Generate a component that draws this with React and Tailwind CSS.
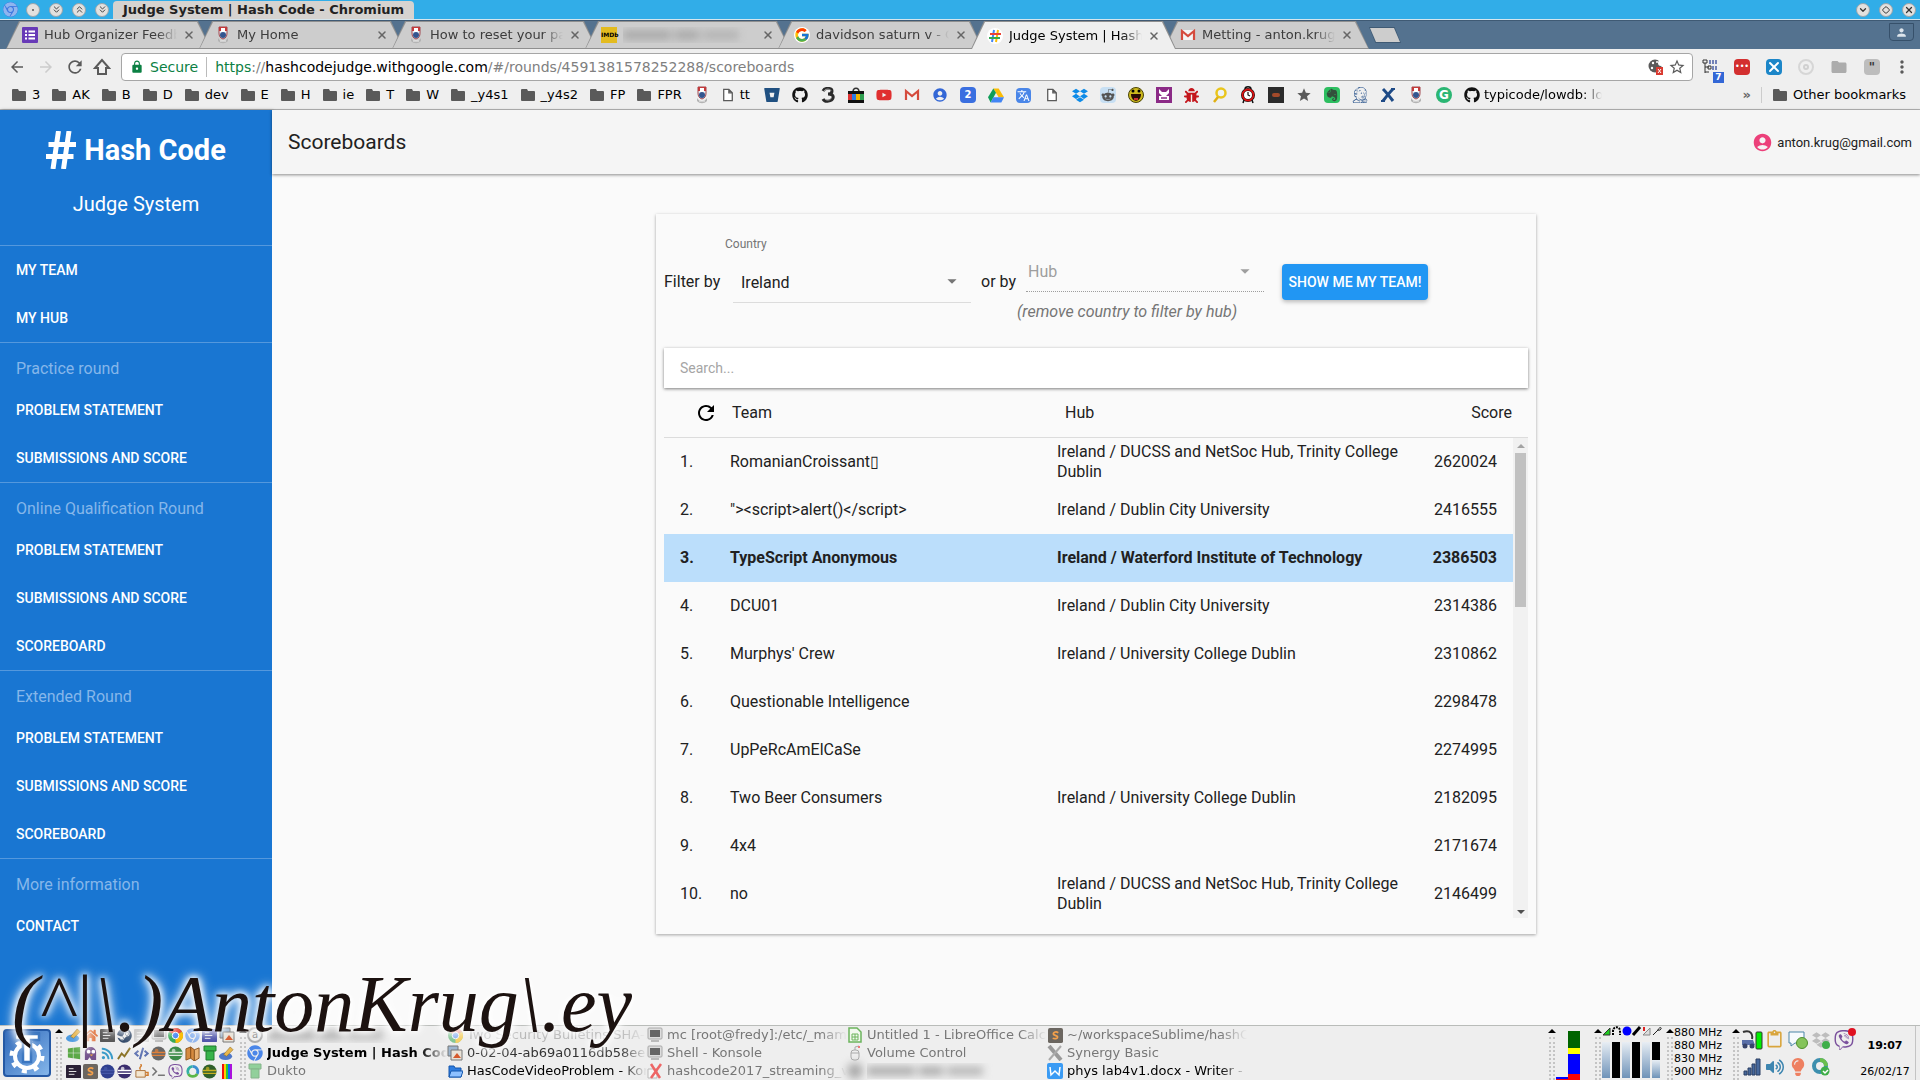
import { useState } from "react";
import {
  FaBitbucket, FaBug, FaChrome, FaCode, FaDropbox, FaEvernote, FaGithub,
  FaHome, FaJenkins, FaLightbulb, FaRedditAlien, FaRss, FaSteam,
  FaTerminal, FaViber, FaVolumeUp, FaWindows, FaYoutube,
} from "react-icons/fa";
import { FcGoogle } from "react-icons/fc";
import {
  MdAccountCircle, MdArrowBack, MdArrowDropDown, MdArrowForward, MdContentPaste,
  MdFolder, MdLock, MdMoreVert, MdPerson, MdRefresh, MdStar, MdStarBorder, MdTranslate,
} from "react-icons/md";
import { ChevronDown, ChevronsDown, ChevronsUp, Diamond, X } from "lucide-react";

/* ---------- small drawings ---------- */

function Crest() {
  return (
    <svg width="16" height="18" viewBox="0 0 16 18">
      <path d="M4 1h8v6c0 3-1 5-4 6-3-1-4-3-4-6z" fill="#e8ebf1" stroke="#a0444c" />
      <path d="M4 1h8v4H4z" fill="#c33a3a" />
      <path d="M6 2h4v4H6z" fill="#fff" />
      <circle cx="8" cy="9" r="3" fill="#33558f" />
      <path d="M3 12c2 4 8 4 10 0v3c-3 3-7 3-10 0z" fill="#b4b4b4" />
      <path d="M5 15h6" stroke="#eee" />
    </svg>
  );
}

function Gmail() {
  return (
    <svg width="16" height="16" viewBox="0 0 16 16">
      <path d="M1 3h14v10H1z" fill="#f4f4f4" />
      <path d="M2 13V4l6 5 6-5v9" fill="none" stroke="#d54b3d" strokeWidth="2.2" />
    </svg>
  );
}

function HashIcon() {
  return (
    <svg width="16" height="16" viewBox="0 0 16 16">
      <circle cx="8" cy="8" r="8" fill="#fff" />
      <g strokeWidth="2">
        <path d="M7 2 5 14" stroke="#4285f4" />
        <path d="M11 2 9 14" stroke="#fbbc05" />
        <path d="M3 6h11" stroke="#ea4335" />
        <path d="M2 10h11" stroke="#34a853" />
      </g>
    </svg>
  );
}

function FormsIcon() {
  return (
    <svg width="16" height="16" viewBox="0 0 16 16">
      <rect width="16" height="16" rx="1" fill="#673ab7" />
      <path d="M3 4.500h2M3 8h2M3 11.500h2M6.500 4.500H13M6.500 8H13M6.500 11.500H13" stroke="#fff" strokeWidth="1.800" />
    </svg>
  );
}

function FileIcon() {
  return (
    <svg width="12" height="16" viewBox="0 0 14 16">
      <path d="M2 1.500h6l4 4v9H2zM8 1.500v4h4" fill="#fff" stroke="#5a5a5a" strokeWidth="1.500" />
    </svg>
  );
}

function HomeIcon() {
  return (
    <svg width="18" height="18" viewBox="0 0 18 18">
      <path d="M9 2 2 10h3v6h8v-6h3z" fill="none" stroke="#5a5a5a" strokeWidth="2" />
    </svg>
  );
}

function ThreeIcon() {
  return (
    <svg width="14" height="16" viewBox="0 0 14 16">
      <path d="M2 4c2-4 9-3 9 0s-3 3-4 3c3 0 6 1 5 4s-8 5-10 1" fill="none" stroke="#2a2a2a" strokeWidth="3" />
      <path d="M3 4c2-3 7-2 7 0M4 12c2 2 6 1 6-1" fill="none" stroke="#bbb" strokeWidth=".8" />
    </svg>
  );
}

function ShopIcon() {
  return (
    <svg width="16" height="16" viewBox="0 0 16 16">
      <path d="M5 5c0-5 6-5 6 0" fill="none" stroke="#333" strokeWidth="1.500" />
      <path d="M0 4h16v3H0zM0 13h16v3H0z" fill="#111" />
      <path d="M0 7h4v6H0z" fill="#d33" />
      <path d="M4 7h4v6H4z" fill="#2c7be5" />
      <path d="M8 7h4v6H8z" fill="#f2b400" />
      <path d="M12 7h4v6h-4z" fill="#2e9e4f" />
    </svg>
  );
}

function SmileyIcon() {
  return (
    <svg width="16" height="16" viewBox="0 0 16 16">
      <circle cx="8" cy="8" r="7.500" fill="#cdb91c" stroke="#4a4408" />
      <path d="M3 7h10c0 9-10 9-10 0z" fill="#2b0d06" />
      <circle cx="5" cy="4" r="1.500" />
      <circle cx="11" cy="4" r="1.500" />
      <path d="M6 11h4v2H6z" fill="#c33" />
    </svg>
  );
}

function PurpleCat() {
  return (
    <svg width="16" height="16" viewBox="0 0 16 16">
      <rect width="16" height="16" fill="#8b2a86" />
      <path d="m3 2 3 3h4l3-3v4l-3 3h3v4H3V9h3L3 6z" fill="#fff" />
      <path d="M5 11h6" stroke="#8b2a86" strokeWidth="1.500" />
    </svg>
  );
}

function Magnifier() {
  return (
    <svg width="16" height="16" viewBox="0 0 16 16">
      <circle cx="9" cy="6" r="4.500" fill="#eef3f5" stroke="#e9c51c" strokeWidth="2.500" />
      <path d="m6 10-4 5" stroke="#e0b013" strokeWidth="2.500" />
    </svg>
  );
}

function RedClock() {
  return (
    <svg width="14" height="18" viewBox="0 0 14 18">
      <path d="M4 3c0-3 6-3 6 0M3 14l-1 3M11 14l1 3" fill="none" stroke="#111" strokeWidth="1.500" />
      <circle cx="7" cy="9" r="5.500" fill="#fff" stroke="#111" strokeWidth="3" />
      <circle cx="7" cy="9" r="5.500" fill="none" stroke="#d11" strokeWidth="1.800" />
      <path d="M7 6v3l2 1" stroke="#111" fill="none" strokeWidth="1.200" />
    </svg>
  );
}

function XMark() {
  return (
    <svg width="16" height="16" viewBox="0 0 16 16">
      <path d="M3 2c4 4 7 8 10 12M13 2C9 6 6 10 3 14" fill="none" stroke="#1d4a86" strokeWidth="3" />
      <path d="M1 14h4M11 2h4" stroke="#1d4a86" strokeWidth="2" />
    </svg>
  );
}

function CookieBlocked() {
  return (
    <svg width="16" height="18" viewBox="0 0 16 18">
      <circle cx="7" cy="8" r="6.500" fill="#5a5a5a" />
      <g fill="#fff">
        <circle cx="5" cy="5" r="1.200" />
        <circle cx="9" cy="4" r="1" />
        <circle cx="4" cy="10" r="1.200" />
        <circle cx="13" cy="5" r="3" />
      </g>
      <rect x="8" y="9" width="7" height="8" fill="#d93a30" />
      <path d="m10 11 3 4m0-4-3 4" stroke="#fff" />
    </svg>
  );
}

function TreeExtension() {
  return (
    <span className="relative block size-4">
      <svg width="16" height="16" viewBox="0 0 16 16">
        <path d="M1 1h4v3H1zM3 4v10M3 8h4M3 13h4M6 7h3v3H6z" fill="none" stroke="#333" />
        <path d="M7 2h9M7 4h9M10 8h6M10 10h6" stroke="#4b5fa5" strokeWidth="1.500" strokeDasharray="2 1" />
      </svg>
      <span className="absolute -bottom-2 -right-1.5 w-[11px] bg-[#3367d6] text-center text-[9px] font-bold leading-[11px] text-white">7</span>
    </span>
  );
}

function HashLogo() {
  return (
    <svg width="30" height="38" viewBox="0 0 30 38" className="shrink-0">
      <g fill="none" stroke="#fff" strokeWidth="5">
        <path d="M12.500 0 7 38M23 0l-5.500 38M2.500 13.500H30M0 25.500h27.500" />
      </g>
    </svg>
  );
}

function GearLogo() {
  return (
    <svg width="38" height="42" viewBox="0 0 38 42">
      <circle cx="19" cy="24" r="12" fill="none" stroke="#fff" strokeWidth="4" />
      <circle cx="19" cy="24" r="15.500" fill="none" stroke="#fff" strokeWidth="4" strokeDasharray="5 7.170" />
      <path d="M6 0h26v9H6z" fill="#3b76c0" />
      <path d="M7 2h24v6h-8v22h-8V8H7z" fill="#fff" stroke="#3b76c0" strokeWidth="2.500" />
    </svg>
  );
}

function MonitorIcon() {
  return (
    <svg width="16" height="16" viewBox="0 0 16 16">
      <rect x="1" y="1" width="14" height="11" rx="1" fill="#ddd" stroke="#aaa" />
      <path d="M3 3h10v7H3z" fill="#666" />
      <path d="M4 14h8" stroke="#bbb" strokeWidth="2" />
    </svg>
  );
}

function SheetIcon() {
  return (
    <svg width="14" height="16" viewBox="0 0 14 16">
      <path d="M1 1h8l4 4v10H1z" fill="#f1f8ee" stroke="#6cb45d" strokeWidth="1.500" />
      <path d="M4 7h6v6H4zM7 7v6M4 10h6" fill="none" stroke="#6cb45d" />
    </svg>
  );
}

function MouseIcon() {
  return (
    <svg width="14" height="16" viewBox="0 0 14 16">
      <rect x="3" y="5" width="8" height="10" rx="3" fill="#eee" stroke="#aaa" />
      <path d="M3 8h8M7 5V2l4-1" fill="none" stroke="#aaa" />
      <path d="M10 1h2v2h-2z" fill="#e77" />
    </svg>
  );
}

function CrossWindow({ color }) {
  return (
    <svg width="16" height="16" viewBox="0 0 16 16">
      <path d="M1 6h9v9H1z" fill="#f6f6f6" stroke="#bbb" />
      <path d="m4 1 9 14M14 1 4 15" stroke={color} strokeWidth="2.500" />
    </svg>
  );
}

function BigX() {
  return (
    <svg width="16" height="16" viewBox="0 0 16 16">
      <path d="m2 1 12 14" stroke="#999" strokeWidth="4" />
      <path d="M14 1 2 15" stroke="#aaa" strokeWidth="2" />
    </svg>
  );
}

function ImageIcon() {
  return (
    <svg width="16" height="16" viewBox="0 0 16 16">
      <path d="M1 1h10v10H1z" fill="#9db6cf" stroke="#777" />
      <path d="M4 5h11v10H4z" fill="#e9e3d8" stroke="#777" />
      <path d="m6 13 4-5 4 5z" fill="#d65a2c" />
    </svg>
  );
}

function BlueFolder() {
  return (
    <svg width="16" height="16" viewBox="0 0 16 16">
      <path d="M2 14V3h5l1 2h6v9z" fill="#2f7de0" stroke="#1457ad" />
      <path d="m2 14 2-6h12l-2 6z" fill="#8dc0ff" stroke="#1457ad" />
    </svg>
  );
}

function WriterIcon() {
  return (
    <svg width="16" height="16" viewBox="0 0 16 16">
      <rect width="16" height="16" rx="2" fill="#3a9bf4" />
      <path d="m3 4 1 8 4-4 4 4 1-8" fill="none" stroke="#fff" strokeWidth="1.500" />
    </svg>
  );
}

function PipeIcon({ faded }) {
  return (
    <svg width="14" height="16" viewBox="0 0 14 16" opacity={faded ? 0.5 : 1}>
      <path d="M1 1h12v5H1z" fill="#37b34a" stroke="#1e7c2d" />
      <path d="M3 6h8v9H3z" fill="#37b34a" stroke="#1e7c2d" />
    </svg>
  );
}

function SublimeIcon() {
  return (
    <svg width="15" height="15" viewBox="0 0 16 16">
      <rect width="16" height="16" rx="2" fill="#6b6660" />
      <path d="M11 5c-3-2-6 0-5 2l4 2c1 2-2 3-5 2" fill="none" stroke="#f4a04a" strokeWidth="1.800" />
    </svg>
  );
}

function Pencil({ color }) {
  return (
    <svg width="15" height="15" viewBox="0 0 16 16">
      <ellipse cx="7" cy="11" rx="7" ry="4" fill={color} />
      <path d="m5 9 7-8 3 3-7 7z" fill="#e9b64a" stroke="#8b6a23" strokeWidth=".6" />
    </svg>
  );
}

function Globe({ a, b }) {
  return (
    <svg width="15" height="15" viewBox="0 0 16 16">
      <circle cx="8" cy="8" r="7.500" fill={a} />
      <path d="M1 7h14M1 10h14" stroke={b} strokeWidth="1.500" />
      <circle cx="6" cy="5" r="2" fill={b} opacity=".7" />
    </svg>
  );
}

function ColorRing() {
  return (
    <svg width="15" height="15" viewBox="0 0 16 16" fill="none" strokeWidth="3">
      <path d="M8 2.500a5.500 5.500 0 0 1 5 8" stroke="#3a8fd0" />
      <path d="M13 10.500a5.500 5.500 0 0 1-9.500 0" stroke="#5cb648" />
      <path d="M3.500 10.500a5.500 5.500 0 0 1 4.500-8" stroke="#32b0a5" />
    </svg>
  );
}

function Rainbow() {
  return (
    <svg width="10" height="15" viewBox="0 0 10 15">
      <path d="M0 0h2v15H0z" fill="#e11" />
      <path d="M2 0h2v15H2z" fill="#fc0" />
      <path d="M4 0h2v15H4z" fill="#2c3" />
      <path d="M6 0h2v15H6z" fill="#16f" />
      <path d="M8 0h2v15H8z" fill="#a1d" />
    </svg>
  );
}

function DarkWindow({ color }) {
  return (
    <svg width="15" height="15" viewBox="0 0 16 16">
      <rect y="1" width="16" height="14" rx="1" fill={color} />
      <path d="M3 5h5M3 8h8M3 11h6" stroke="#eee" />
    </svg>
  );
}

function DriveIcon() {
  return (
    <svg width="17" height="15" viewBox="0 0 18 16">
      <path d="M6 0h6l6 10h-6z" fill="#fbbc05" />
      <path d="M6 0 0 10l3 6 6-11z" fill="#0f9d58" />
      <path d="m6 10h12l-3 6H3z" fill="#4285f4" />
    </svg>
  );
}

function ChromeIcon() {
  return (
    <svg width="15" height="15" viewBox="0 0 16 16">
      <circle cx="8" cy="8" r="8" fill="#34a853" />
      <path d="M8 8 1 4a8 8 0 0 1 14 0z" fill="#ea4335" />
      <path d="M8 8l7-4a8 8 0 0 1-7 12z" fill="#fbbc05" />
      <circle cx="8" cy="8" r="3.500" fill="#4285f4" stroke="#fff" />
    </svg>
  );
}

function PurpleBird() {
  return (
    <svg width="15" height="15" viewBox="0 0 16 16">
      <path d="M2 15V7c0-8 12-8 12 0v8H9l-2-3-2 3z" fill="#73528c" />
      <circle cx="6" cy="6" r="2" fill="#fff" />
      <circle cx="11" cy="6" r="2" fill="#fff" />
      <path d="M7 9h4l-2 2z" fill="#e8a23c" />
    </svg>
  );
}

function Spark() {
  return (
    <svg width="15" height="15" viewBox="0 0 16 16">
      <path d="m1 14 4-6 3 3 6-9" fill="none" stroke="#8a7327" strokeWidth="2" />
    </svg>
  );
}

function MapIcon() {
  return (
    <svg width="15" height="15" viewBox="0 0 16 16">
      <path d="m1 3 5-2v12l-5 2zM6 1l4 3v12l-4-3z" fill="#d58a3f" stroke="#8d5520" />
      <path d="m10 4 5-2v11l-5 3z" fill="#e8b274" stroke="#8d5520" />
    </svg>
  );
}

function Cup() {
  return (
    <svg width="15" height="15" viewBox="0 0 16 16">
      <path d="M2 7h10v7H2z" fill="#f3e6d0" stroke="#a9703a" />
      <path d="M12 9h3v3h-3M7 6c-3-3 3-3 0-6" fill="none" stroke="#d07b2c" strokeWidth="1.500" />
    </svg>
  );
}

/* ---------- data ---------- */

const tabs = [
  { icon: <FormsIcon />, title: "Hub Organizer Feedback" },
  { icon: <Crest />, title: "My Home" },
  { icon: <Crest />, title: "How to reset your password" },
  { icon: <span className="w-4 bg-[#e3bb1f] text-center text-[6px] font-bold leading-4 text-black">IMDb</span>, title: "" },
  { icon: <FcGoogle size={16} className="rounded-full bg-white" />, title: "davidson saturn v - Google" },
  { icon: <HashIcon />, title: "Judge System | Hash Code", active: true },
  { icon: <Gmail />, title: "Metting - anton.krug@gmail" },
];

const folders = ["3", "AK", "B", "D", "dev", "E", "H", "ie", "T", "W", "_y4s1", "_y4s2", "FP", "FPR"];

const bookmarks = [
  <FaBitbucket size={16} color="#205081" />,
  <FaGithub size={16} color="#111" />,
  <ThreeIcon />,
  <ShopIcon />,
  <FaYoutube size={18} color="#e02f2f" />,
  <Gmail />,
  <MdAccountCircle size={18} color="#3367d6" />,
  <span className="w-4 rounded-sm bg-[#3a6fe0] text-center text-[10px] font-bold leading-4 text-white">2</span>,
  <DriveIcon />,
  <span className="rounded-sm bg-[#4a86e8] p-px text-white"><MdTranslate size={13} /></span>,
  <FileIcon />,
  <FaDropbox size={17} color="#0d8be8" />,
  <span className="rounded-sm bg-[#c7dff3] p-px text-[#555]"><FaRedditAlien size={14} /></span>,
  <SmileyIcon />,
  <PurpleCat />,
  <FaBug size={15} color="#c4161c" />,
  <Magnifier />,
  <RedClock />,
  <span className="flex size-4 items-center justify-center bg-[#2b2b2b]"><span className="h-1 w-2 rounded-full bg-[#a34a2a]" /></span>,
  <MdStar size={18} color="#5a5a5a" />,
  <span className="rounded-sm bg-[#2dbe60] p-px text-[#33503c]"><FaEvernote size={14} /></span>,
  <FaJenkins size={16} color="#1d4a86" />,
  <XMark />,
  <Crest />,
  <span className="w-4 rounded-full bg-[#2bb673] text-center text-xs font-bold leading-4 text-white">G</span>,
];

const sections = [
  { items: ["My team", "My hub"] },
  { heading: "Practice round", items: ["Problem statement", "Submissions and score"] },
  { heading: "Online Qualification Round", items: ["Problem statement", "Submissions and score", "Scoreboard"] },
  { heading: "Extended Round", items: ["Problem statement", "Submissions and score", "Scoreboard"] },
  { heading: "More information", items: ["Contact"] },
];

const teams = [
  { name: "RomanianCroissant▯", hub: "Ireland / DUCSS and NetSoc Hub, Trinity College Dublin", score: 2620024 },
  { name: "\"><script>alert()</script>", hub: "Ireland / Dublin City University", score: 2416555 },
  { name: "TypeScript Anonymous", hub: "Ireland / Waterford Institute of Technology", score: 2386503, mine: true },
  { name: "DCU01", hub: "Ireland / Dublin City University", score: 2314386 },
  { name: "Murphys' Crew", hub: "Ireland / University College Dublin", score: 2310862 },
  { name: "Questionable Intelligence", hub: "", score: 2298478 },
  { name: "UpPeRcAmElCaSe", hub: "", score: 2274995 },
  { name: "Two Beer Consumers", hub: "Ireland / University College Dublin", score: 2182095 },
  { name: "4x4", hub: "", score: 2171674 },
  { name: "no", hub: "Ireland / DUCSS and NetSoc Hub, Trinity College Dublin", score: 2146499 },
];

const launchers = [
  <Pencil color="#4f9be0" />, <FaHome size={15} color="#e0703a" />, <DarkWindow color="#555" />, <FaSteam size={15} color="#2d4566" />, <span className="opacity-40"><DarkWindow color="#888" /></span>,
  <MonitorIcon />, <ChromeIcon />, <FaChrome size={15} color="#8fb5ef" />, <DarkWindow color="#4a4fa8" />, <ImageIcon />,
  <FaWindows size={14} color="#5aa845" />, <PurpleBird />, <FaRss size={13} color="#3a9bc8" />, <Spark />, <FaCode size={15} color="#5a6fb0" />,
  <Globe a="#666" b="#e0803a" />, <Globe a="#3d8b4a" b="#dfe8df" />, <MapIcon />, <PipeIcon />, <Pencil color="#4f78c8" />,
  <DarkWindow color="#2a2035" />, <SublimeIcon />, <Globe a="#2f3f8f" b="#4658a8" />, <Globe a="#3a2d6d" b="#fff" />, <Cup />,
  <FaTerminal size={13} color="#777" />, <FaViber size={15} color="#7b519d" />, <ColorRing />, <Globe a="#2f5f2a" b="#c8b020" />, <Rainbow />,
];

const tasks = [
  { icon: <span className="size-4 rounded-full border-2 border-[#aaa] text-center text-[10px] leading-3 text-[#888]">a</span>, title: "", hidden: true },
  { icon: <FaChrome size={16} color="#4a86e8" />, title: "Judge System | Hash Code - Chromium", look: "font-bold text-black" },
  { icon: <PipeIcon faded />, title: "Dukto", look: "text-[#777]" },
  { icon: <span className="opacity-60"><ChromeIcon /></span>, title: "Two Security Bulletins SHA-1", look: "text-[#b5b5b5]" },
  { icon: <ImageIcon />, title: "0-02-04-ab69a0116db58eee", look: "text-[#333]" },
  { icon: <BlueFolder />, title: "HasCodeVideoProblem - Konqueror", look: "text-black" },
  { icon: <MonitorIcon />, title: "mc [root@fredy]:/etc/_mama", look: "text-[#777]" },
  { icon: <MonitorIcon />, title: "Shell - Konsole", look: "text-[#777]" },
  { icon: <CrossWindow color="#e66" />, title: "hashcode2017_streaming_video", look: "text-[#777]" },
  { icon: <SheetIcon />, title: "Untitled 1 - LibreOffice Calc", look: "text-[#777]" },
  { icon: <MouseIcon />, title: "Volume Control", look: "text-[#777]" },
  { icon: <span className="size-4 rounded-full bg-[#aaa] blur-xs" />, title: "", hidden: true },
  { icon: <SublimeIcon />, title: "~/workspaceSublime/hashCode", look: "text-[#777]" },
  { icon: <BigX />, title: "Synergy Basic", look: "text-[#777]" },
  { icon: <WriterIcon />, title: "phys lab4v1.docx - Writer - Calligra", look: "text-black" },
];

/* ---------- window frame ---------- */

function WindowButton({ label, children }) {
  return (
    <button aria-label={label} className="flex size-3.5 items-center justify-center rounded-full border border-[#9aa5ab] bg-[#e3e1df] text-[#333]">
      {children}
    </button>
  );
}

function TitleBar() {
  return (
    <div className="flex h-5 items-center border-b border-[#d5e6ee] bg-[#31ade8] pl-[3px] pr-1">
      <FaChrome size={15} color="#8fb5ef" className="shrink-0 rounded-full bg-[#3f78e0]" />
      <div className="ml-2 flex gap-[9px]">
        <WindowButton label="Pin"><span className="size-0.5 bg-[#777]" /></WindowButton>
        <WindowButton label="Keep below"><ChevronsDown size={11} /></WindowButton>
        <WindowButton label="Keep above"><ChevronsUp size={11} /></WindowButton>
        <WindowButton label="Shade"><ChevronsDown size={11} /></WindowButton>
      </div>
      <div className="ml-1 mt-px h-[18px] rounded-t-sm bg-[#d6d3d0] px-2.5 text-[13px] font-bold leading-[18px] text-[#222]">
        Judge System | Hash Code - Chromium
      </div>
      <div className="ml-auto flex gap-[9px]">
        <WindowButton label="Minimize"><ChevronDown size={10} strokeWidth={3} /></WindowButton>
        <WindowButton label="Maximize"><Diamond size={8} strokeWidth={3} /></WindowButton>
        <WindowButton label="Close"><X size={10} strokeWidth={3} /></WindowButton>
      </div>
    </div>
  );
}

function Redacted() {
  return (
    <span className="flex gap-1 py-1 blur-xs" aria-hidden="true">
      <span className="h-2 w-12 bg-[#a4a4a4]" />
      <span className="h-2 w-6 bg-[#a4a4a4]" />
      <span className="h-2 w-9 bg-[#b0b0b0]" />
    </span>
  );
}

function Tab({ icon, title, active }) {
  const shape = "[clip-path:polygon(13px_0,calc(100%-13px)_0,100%_100%,0_100%)]";
  return (
    <div className={`-ml-3 h-7 w-[205px] bg-[#8f8f8f] px-px pt-px ${shape} ${active ? "relative z-10" : "pb-px"}`}>
      <div className={`flex h-full items-center pl-[15px] pr-[15px] ${shape} ${active ? "bg-[#efefef] text-black" : "bg-[#cdcdcd] text-[#3c3c3c]"}`}>
        <span className="flex w-4 shrink-0 justify-center">{icon}</span>
        <span className="ml-1.5 flex-1 overflow-hidden whitespace-nowrap text-[13px] [mask-image:linear-gradient(to_right,black_85%,transparent)]">
          {title || <Redacted />}
        </span>
        <button aria-label="Close tab" className="ml-1.5 text-[#666]"><X size={12} strokeWidth={3} /></button>
      </div>
    </div>
  );
}

function TabStrip() {
  return (
    <div className="flex h-[29px] items-end border-t border-[#3f5a74] bg-[#54728f] pl-[18px] pr-1.5">
      {tabs.map((tab, i) => (
        <Tab key={i} {...tab} />
      ))}
      <button aria-label="New tab" className="mb-1.5 h-4 w-8 bg-[#3f5a74] p-px [clip-path:polygon(0_0,80%_0,100%_100%,20%_100%)]">
        <span className="block h-full bg-[#cdcdcd] [clip-path:polygon(0_0,80%_0,100%_100%,20%_100%)]" />
      </button>
      <button aria-label="Profile" className="mb-2 ml-auto flex h-[18px] w-[25px] items-center justify-center rounded-b border border-[#36506a] text-[#dde5ec]">
        <MdPerson size={13} />
      </button>
    </div>
  );
}

function AddressBar() {
  return (
    <div className="flex h-9 items-center bg-[#efefef] pl-2 pr-2 text-[#5a5a5a]">
      <button aria-label="Back" className="mr-[11px]"><MdArrowBack size={18} /></button>
      <button aria-label="Forward" className="mr-2.5 text-[#ccc]"><MdArrowForward size={18} /></button>
      <button aria-label="Reload" className="mr-2"><MdRefresh size={20} /></button>
      <button aria-label="Home"><HomeIcon /></button>
      <div className="ml-2.5 flex h-7 flex-1 items-center rounded-sm border border-[#a6a6a6] bg-white pl-2 pr-1.5 text-sm">
        <MdLock size={14} color="#0b8043" />
        <span className="ml-1.5 text-[#0b8043]">Secure</span>
        <span className="mx-2 h-5 w-px bg-[#bbb]" />
        <span className="flex-1 whitespace-nowrap text-[#808080]">
          <span className="text-[#0b8043]">https</span>://<span className="text-black">hashcodejudge.withgoogle.com</span>/#/rounds/4591381578252288/scoreboards
        </span>
        <CookieBlocked />
        <button aria-label="Bookmark this page" className="ml-1"><MdStarBorder size={18} /></button>
      </div>
      <div className="ml-[9px] flex items-center gap-4">
        <TreeExtension />
        <span className="size-4 rounded-sm bg-[#d32f2f] text-center text-[8px] leading-4 text-white">•••</span>
        <span className="rounded-sm bg-[#1c86c8] text-white"><X size={16} strokeWidth={3} /></span>
        <span className="flex size-4 items-center justify-center rounded-full border-2 border-[#d6d6d6]"><span className="size-1.5 rounded-full border-2 border-[#d0d0d0]" /></span>
        <MdFolder size={18} color="#acacac" />
        <span className="w-4 rounded-sm bg-[#bdbdbd] text-center text-xs font-bold leading-4 text-[#333]">"</span>
        <button aria-label="Menu" className="-ml-1"><MdMoreVert size={20} /></button>
      </div>
    </div>
  );
}

function FolderGlyph() {
  return (
    <svg width="14" height="12" viewBox="0 0 14 12">
      <path d="M1 0h5l1 2h6a1 1 0 0 1 1 1v8a1 1 0 0 1-1 1H1a1 1 0 0 1-1-1V1a1 1 0 0 1 1-1z" fill="#5a5a5a" />
    </svg>
  );
}

function BookmarkBar() {
  return (
    <div className="flex h-[25px] items-center border-b border-[#b6b6b6] bg-[#efefef] pb-1 pl-3 pr-3.5 text-[13px] text-black">
      <div className="flex items-center gap-3">
        {folders.map((name) => (
          <a key={name} href="#" className="flex items-center gap-1.5">
            <FolderGlyph />
            {name}
          </a>
        ))}
        <a href="#" aria-label="College"><Crest /></a>
        <a href="#" className="flex items-center gap-1.5"><FileIcon />tt</a>
      </div>
      <div className="ml-3.5 flex items-center gap-3">
        {bookmarks.map((icon, i) => (
          <a key={i} href="#" aria-label="Bookmark" className="flex size-4 items-center justify-center">{icon}</a>
        ))}
        <a href="#" className="flex items-center gap-1 whitespace-nowrap">
          <FaGithub size={16} color="#111" />
          <span className="w-[118px] overflow-hidden [mask-image:linear-gradient(to_right,black_85%,transparent)]">typicode/lowdb: lowdb</span>
        </a>
      </div>
      <button aria-label="More bookmarks" className="ml-auto mr-2.5 font-bold text-[#666]">»</button>
      <span className="mr-[11px] h-4 w-px bg-[#ccc]" />
      <a href="#" className="flex items-center gap-1.5 whitespace-nowrap">
        <FolderGlyph />
        Other bookmarks
      </a>
    </div>
  );
}

/* ---------- page ---------- */

function Sidebar() {
  return (
    <nav className="w-[272px] shrink-0 bg-[#1976d2] text-white shadow-[1px_0_3px_rgba(0,0,0,0.35)]">
      <div className="h-[135px] pt-5">
        <div className="flex items-center justify-center gap-2">
          <HashLogo />
          <span className="text-[29px] font-bold leading-10">Hash Code</span>
        </div>
        <h2 className="mt-[18px] text-center text-xl leading-8">Judge System</h2>
      </div>
      {sections.map((section, i) => (
        <div key={i} className="border-t border-[#5498dd]">
          {section.heading && (
            <h3 className="flex h-[43px] items-center pl-4 pt-2 text-base text-[#86b7ea]">{section.heading}</h3>
          )}
          {section.items.map((item) => (
            <a key={item} href="#" className="flex h-12 items-center pl-4 text-sm font-medium uppercase">
              {item}
            </a>
          ))}
        </div>
      ))}
    </nav>
  );
}

function Filters() {
  const [country, setCountry] = useState("Ireland");

  return (
    <div className="mb-1.5 flex h-[120px] items-center whitespace-nowrap">
      <span className="w-[61px]">Filter by</span>
      <div className="h-24 w-[246px]">
        <label htmlFor="country" className="block h-[30px] text-xs leading-5 text-[#757575]">Country</label>
        <div className="relative ml-2">
          <select
            id="country"
            value={country}
            onChange={(e) => setCountry(e.target.value)}
            className="h-[39px] w-full appearance-none border-b border-[#dcdcdc] bg-transparent pl-2"
          >
            <option>Ireland</option>
          </select>
          <MdArrowDropDown size={22} className="pointer-events-none absolute right-2 top-1.5 text-[#757575]" />
        </div>
      </div>
      <label htmlFor="hub" className="ml-2.5 w-9">or by</label>
      <div className="h-24 w-[247px] pt-[18px]">
        <div className="relative ml-[9px]">
          <select
            id="hub"
            disabled
            className="h-10 w-full appearance-none border-b border-dotted border-[#9e9e9e] bg-transparent pl-0.5 text-[#9e9e9e] opacity-100"
          >
            <option>Hub</option>
          </select>
          <MdArrowDropDown size={22} className="pointer-events-none absolute right-2 top-2 text-[#9e9e9e]" />
        </div>
        <em className="block leading-10 text-[#757575]">(remove country to filter by hub)</em>
      </div>
      <button className="ml-[18px] h-9 w-[146px] shrink-0 rounded-sm bg-[#2196f3] text-sm font-medium uppercase text-white shadow-[0_2px_4px_rgba(0,0,0,0.26)]">
        Show me my team!
      </button>
    </div>
  );
}

function ScoreTable() {
  return (
    <div className="relative">
      <table className="block">
        <thead className="block border-b border-[#dcdcdc]">
          <tr className="flex h-[49px] items-center text-left">
            <th className="w-[68px] pl-[30px] font-normal">
              <button aria-label="Refresh" className="block text-black"><MdRefresh size={24} /></button>
            </th>
            <th className="w-[333px] font-normal">Team</th>
            <th className="flex-1 font-normal">Hub</th>
            <th className="pr-4 font-normal">Score</th>
          </tr>
        </thead>
        <tbody className="block pr-[15px]">
          {teams.map((team, i) => (
            <tr key={team.name} className={`flex h-12 items-center ${team.mine ? "bg-[#bbdefb] font-bold" : ""}`}>
              <td className="w-[66px] pl-4">{i + 1}.</td>
              <td className="w-[327px]">{team.name}</td>
              <td className="flex-1 leading-5">{team.hub}</td>
              <td className="w-[92px] pr-4 text-right">{team.score}</td>
            </tr>
          ))}
        </tbody>
      </table>
      {/* scroll bar over the right edge of the body */}
      <div className="absolute bottom-0 right-0 top-[50px] flex w-[15px] flex-col items-center bg-[#f1f1f1] pb-1 pt-1.5">
        <span className="border-x-4 border-b-4 border-x-transparent border-b-[#a3a3a3]" />
        <span className="mt-[5px] h-[154px] w-[11px] bg-[#c1c1c1]" />
        <span className="mt-auto border-x-4 border-t-4 border-x-transparent border-t-[#505050]" />
      </div>
    </div>
  );
}

function Scoreboards() {
  return (
    <div className="flex min-w-0 flex-1 flex-col bg-[#fafafa]">
      <header className="flex h-16 items-center justify-between bg-[#f5f5f5] pl-4 pr-2 pt-px shadow-[0_1px_3px_rgba(0,0,0,0.45)]">
        <h1 className="text-[21px]">Scoreboards</h1>
        <a href="#" className="flex items-center gap-1 text-[13px]">
          <MdAccountCircle size={21} color="#ec407a" />
          anton.krug@gmail.com
        </a>
      </header>
      <main className="mx-auto mt-10 w-full max-w-[880px] px-2 pb-4 pt-2 shadow-[0_1px_3px_rgba(0,0,0,0.35)]">
        <Filters />
        <input
          type="search"
          aria-label="Search"
          placeholder="Search..."
          className="block h-10 w-full bg-white px-4 text-sm shadow-[0_1px_3px_rgba(0,0,0,0.5)] placeholder:text-[#a5a5a5]"
        />
        <ScoreTable />
      </main>
    </div>
  );
}

/* ---------- desktop panel ---------- */

function Grip() {
  return (
    <div className="flex w-3 shrink-0 flex-col items-end gap-1 pt-[3px]">
      <span className="border-x-4 border-b-4 border-x-transparent border-b-black" />
      <span className="mr-px w-1.5 flex-1 border-x-2 border-dotted border-[#c4c4c4]" />
    </div>
  );
}

function Meter({ fill }) {
  return (
    <span className="flex h-9 w-2 flex-col bg-black">
      <span className="mt-auto bg-linear-to-b from-[#e8eef4] to-[#6f93b8]" style={{ height: `${fill}%` }} />
    </span>
  );
}

function Taskbar() {
  return (
    <footer className="flex h-[55px] border-t border-[#b9bcb9] bg-[#eeeeee] text-[13px]">
      <button aria-label="Start" className="ml-[3px] mt-[3px] flex size-12 shrink-0 items-center justify-center rounded border-2 border-[#2458a4] bg-linear-to-br from-[#2c66b8] to-[#85b6ea]">
        <GearLogo />
      </button>
      <Grip />
      <div className="ml-0.5 grid grid-cols-[repeat(10,17px)] grid-rows-3 items-center justify-items-center">
        {launchers.map((icon, i) => (
          <button key={i} aria-label="Launch">{icon}</button>
        ))}
      </div>
      <Grip />
      <div className="grid min-w-0 grid-flow-col grid-cols-[repeat(5,200px)] grid-rows-3">
        {tasks.map((task, i) => (
          <button key={i} className="flex min-w-0 items-center gap-1 text-left">
            <span className="flex w-4 shrink-0 justify-center">{task.icon}</span>
            <span className={`flex-1 overflow-hidden whitespace-nowrap leading-[18px] [mask-image:linear-gradient(to_right,black_85%,transparent)] ${task.look || ""}`}>
              {task.hidden ? <Redacted /> : task.title}
            </span>
          </button>
        ))}
      </div>

      <div className="ml-auto flex shrink-0">
        <Grip />
        <div className="flex items-end">
          <span className="h-[3px] w-3 border-b border-[#f00] bg-[#00f]" />
          <span className="flex w-3 flex-col">
            <span className="h-[17px] bg-[#006400]" />
            <span className="h-1.5 bg-[#ff0]" />
            <span className="h-5 bg-[#00f]" />
            <span className="h-1.5 bg-[#f00]" />
          </span>
        </div>
        <span className="w-2.5" />
        <Grip />
        <div className="flex flex-col justify-between pb-0.5">
          <svg width="60" height="11" viewBox="0 0 60 11">
            <path d="M1 9h7V2z" fill="#2c2" stroke="#333" />
            <path d="M11 9V5c0-5 7-5 7 0v4" fill="none" stroke="#000" strokeWidth="2" strokeDasharray="2 1" />
            <circle cx="25" cy="5" r="4.500" fill="#00f" />
            <path d="m31 9 7-8" stroke="#000" strokeWidth="3" />
            <path d="M41 9h7V2z" fill="#ddd" stroke="#888" />
            <path d="M42 1v4" stroke="#d22" strokeWidth="2" />
            <path d="m51 9 5-5c1-3 4-3 3-1s-4 1-3 1" fill="none" stroke="#222" />
          </svg>
          <div className="flex gap-0.5">
            {[100, 0, 100, 0, 100, 50].map((fill, i) => (
              <Meter key={i} fill={fill} />
            ))}
          </div>
        </div>
        <Grip />
        <div className="w-[54px] text-[11px] leading-[13px] text-black">
          <div>880 MHz</div>
          <div>880 MHz</div>
          <div>830 MHz</div>
          <div>900 MHz</div>
        </div>
        <Grip />
        <div className="grid grid-cols-[repeat(5,23px)] grid-rows-2 items-center justify-items-center">
          <svg width="22" height="20" viewBox="0 0 22 20">
            <path d="M2 2c8-3 10 3 9 7" fill="none" stroke="#333" strokeWidth="2" />
            <path d="M1 10h11l2 5H1z" fill="#5a6fa8" />
            <circle cx="4" cy="16" r="2.500" fill="#38446b" />
            <circle cx="11" cy="16" r="2.500" fill="#38446b" />
            <rect x="15" y="2" width="6" height="17" rx="1" fill="#0e0" stroke="#333" />
          </svg>
          <MdContentPaste size={19} color="#d9a53c" />
          <svg width="20" height="20" viewBox="0 0 20 20">
            <path d="M1 2h15v11H7l-4 3v-3H1z" fill="#f6fafd" stroke="#4a86a8" />
            <circle cx="14" cy="13" r="5.500" fill="#85c45a" stroke="#4f8f2c" />
          </svg>
          <span className="relative text-[#bdbdbd]">
            <FaDropbox size={18} />
            <span className="absolute bottom-0 right-0 size-2 rounded-full bg-[#3fae49]" />
          </span>
          <span className="relative text-[#7b519d]">
            <FaViber size={20} />
            <span className="absolute -right-0.5 -top-0.5 size-2 rounded-full bg-[#e01020]" />
          </span>
          <svg width="18" height="18" viewBox="0 0 18 18" fill="#47699c" stroke="#2b3f63">
            <path d="M1 13h3v4H1zM5 10h3v7H5zM9 6h3v11H9zM13 1h4v16h-4z" />
          </svg>
          <FaVolumeUp size={18} color="#3e86b0" />
          <FaLightbulb size={18} color="#ee8061" />
          <svg width="18" height="18" viewBox="0 0 18 18" fill="none">
            <circle cx="8" cy="8" r="6" stroke="#3d8fae" strokeWidth="4" />
            <path d="M8 2a6 6 0 0 1 6 6" stroke="#6bbf4b" strokeWidth="4" />
            <circle cx="13" cy="13" r="4.500" fill="#3fae49" />
            <path d="m11 13 2 2 3-3" stroke="#fff" strokeWidth="1.500" />
          </svg>
        </div>
        <div className="mr-1 flex w-[61px] flex-col justify-between border-r border-[#c4c4c4] pt-3 text-center text-[11px] leading-4 text-black">
          <span className="font-bold">19:07</span>
          <span>26/02/17</span>
        </div>
      </div>
    </footer>
  );
}

function App() {
  return (
    <div className="relative flex min-h-screen flex-col overflow-hidden bg-[#eeeeee] font-['DejaVu_Sans',sans-serif]">
      <TitleBar />
      <TabStrip />
      <AddressBar />
      <BookmarkBar />
      <div className="flex flex-1 font-['Roboto',sans-serif] text-base text-[#212121]">
        <Sidebar />
        <Scoreboards />
      </div>
      <Taskbar />

      {/* signature laid over the desktop */}
      <div className="pointer-events-none absolute bottom-4 left-3 whitespace-nowrap font-['Liberation_Serif',serif] text-[80px] italic leading-[120px] text-[#1c1210] [text-shadow:0_0_6px_white,0_0_10px_white,0_0_14px_white]">
        (^|\.)AntonKrug\.ey
      </div>
    </div>
  );
}

export default App;
